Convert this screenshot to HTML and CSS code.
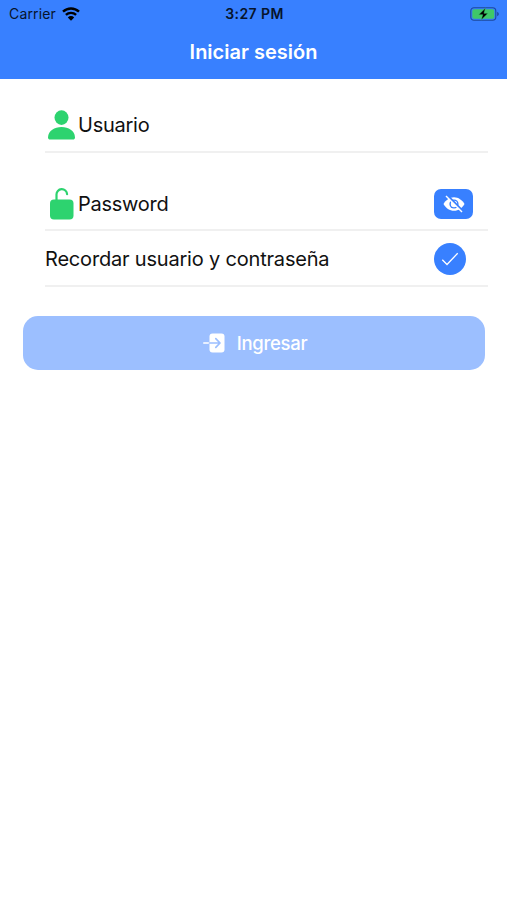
FILE: index.html
```html
<!DOCTYPE html>
<html lang="es">
<head>
    <meta charset="UTF-8">
    <meta name="viewport" content="width=device-width, initial-scale=1.0">
    <title>Iniciar sesión</title>
    <link rel="stylesheet" href="styles.css">
</head>
<body>
    <header class="header">
        <!-- Status bar -->
        <div class="status-bar">
            <div class="carrier">
                <span>Carrier</span>
                <svg class="wifi" viewBox="0 0 18 14">
                    <path d="M1 4.7a11.6 11.6 0 0 1 16 0M3.9 7.9a7.4 7.4 0 0 1 10.2 0" fill="none" stroke="#000" stroke-width="2.4"/>
                    <path d="M9 13.7L5.8 10.4a4.6 4.6 0 0 1 6.4 0z"/>
                </svg>
            </div>
            <span class="time">3:27 PM</span>
            <svg class="battery" viewBox="0 0 30 14">
                <rect x=".8" y=".8" width="25" height="12.4" rx="3.2" fill="none" stroke="#1c489c" stroke-width="1.1"/>
                <rect x="2.3" y="2.3" width="22" height="9.4" rx="1.8" fill="#3fc869"/>
                <path d="M27.2 4.8c2.2 1 2.2 3.4 0 4.4z" fill="#1c489c"/>
                <path d="M15.5 1L8.7 7.7h4L11.2 13 18 6.3h-4z" stroke="#3fc869" stroke-width=".5"/>
            </svg>
        </div>
        <h1 class="title">Iniciar sesión</h1>
    </header>

    <!-- Login form -->
    <form class="login">
        <div class="item item-user">
            <svg class="icon-user" viewBox="0 0 27 30">
                <ellipse cx="13.5" cy="7.6" rx="7" ry="7.3"/>
                <path d="M2.2 29.5C.8 29.5 0 28.6 0 27.2 .5 20.8 6.4 17.1 13.5 17.1S26.5 20.8 27 27.2c0 1.4-.8 2.3-2.2 2.3z"/>
            </svg>
            <label>Usuario</label>
        </div>
        <div class="item item-password">
            <svg class="icon-lock" viewBox="0 0 24 32">
                <rect x="0" y="11.5" width="23.5" height="20" rx="4"/>
                <path d="M6.5 13V6.8a5.3 5.3 0 0 1 10.6-.6" fill="none" stroke="#2dd36f" stroke-width="2.2" stroke-linecap="round"/>
            </svg>
            <label>Password</label>
            <button type="button" class="btn-eye" aria-label="Mostrar">
                <svg viewBox="0 0 22 18">
                    <path d="M.5 9C2.8 5 6.600 2.200 11 2.200S19.200 5 21.500 9c-2.300 4-6.100 6.800-10.500 6.800S2.800 13 .5 9z" fill="#fff"/>
                    <circle cx="11" cy="9" r="4.6" fill="#3880ff"/>
                    <circle cx="11" cy="9" r="3.2" fill="#fff"/>
                    <path d="M4.2 .2L20.2 16.2" stroke="#3880ff" stroke-width="2"/>
                    <path d="M3 1L19 17" stroke="#fff" stroke-width="1.5"/>
                </svg>
            </button>
        </div>
        <div class="item item-remember">
            <label>Recordar usuario y contraseña</label>
            <span class="check">
                <svg viewBox="0 0 18 14">
                    <path d="M1.3 7.8L6 12.5 16.7 1.2" fill="none" stroke="#fff" stroke-width="1.3"/>
                </svg>
            </span>
        </div>
        <button type="button" class="btn-login">
            <svg class="icon-enter" viewBox="0 0 22 20">
                <rect x="6.5" y=".5" width="15" height="19" rx="3" fill="#fff"/>
                <path d="M.8 10H6.5" stroke="#fff" stroke-width="1.7" stroke-linecap="round"/>
                <path d="M6.5 10h10M12.8 5.7L17 10l-4.2 4.3" fill="none" stroke="#9cbfff" stroke-width="1.7" stroke-linecap="round" stroke-linejoin="round"/>
            </svg>
            <span>Ingresar</span>
        </button>
    </form>
</body>
</html>
```

FILE: styles.css
```css
body {
    font-family: Inter, "Liberation Sans", sans-serif;
    margin: 0;
    background-color: #fff;
    color: #111;
}
.header {
    box-sizing: border-box;
    height: 79px;
    background-color: #3880ff;
}
.status-bar {
    display: grid;
    grid-template-columns: 1fr auto 1fr;
    align-items: center;
    height: 27px;
    padding: 0 7px 0 9px;
    font-size: 14px;
    color: #07142c;
}
.carrier {
    display: flex;
    align-items: center;
    gap: 6px;
    letter-spacing: 0.15px;
}
.wifi {
    width: 18px;
    height: 14px;
}
.time {
    font-size: 14px;
    font-weight: 600;
    letter-spacing: 0.4px;
}
.battery {
    width: 30px;
    height: 14px;
    justify-self: end;
}
.title {
    margin: 0;
    font-size: 20px;
    font-weight: 600;
    line-height: 51px;
    text-align: center;
    color: #fff;
}
.item {
    display: flex;
    align-items: center;
    box-sizing: border-box;
    margin: 0 19px 0 45px;
    border-bottom: 2px solid #f0f0f0;
    font-size: 20px;
    letter-spacing: -0.25px;
}
.item svg {
    display: block;
}
.item-user {
    height: 74px;
    padding: 20px 0 0 3px;
}
.item-password {
    height: 78px;
    padding: 25px 15px 0 5px;
}
.item-remember {
    height: 56px;
    padding: 1px 22px 0 0;
    letter-spacing: -0.19px;
}
.icon-user {
    width: 27px;
    height: 30px;
    margin-right: 3px;
    fill: #2dd36f;
}
.icon-lock {
    width: 24px;
    height: 32px;
    margin-right: 4px;
    fill: #2dd36f;
}
.btn-eye {
    display: flex;
    align-items: center;
    justify-content: center;
    width: 39px;
    height: 30px;
    margin-left: auto;
    padding: 0;
    border: none;
    border-radius: 7px;
    background-color: #3880ff;
}
.btn-eye svg {
    width: 22px;
    height: 18px;
}
.check {
    display: flex;
    align-items: center;
    justify-content: center;
    width: 32px;
    height: 32px;
    margin-left: auto;
    border-radius: 50%;
    background-color: #3880ff;
}
.check svg {
    width: 18px;
    height: 14px;
}
.btn-login {
    display: flex;
    align-items: center;
    justify-content: center;
    gap: 12px;
    width: 462px;
    height: 54px;
    margin: 29px 0 0 23px;
    padding: 0 0 0 2px;
    border: none;
    border-radius: 15px;
    background-color: #9cbfff;
    color: #fff;
    font-family: inherit;
    font-size: 18.5px;
    font-weight: 500;
    letter-spacing: -0.3px;
}
.icon-enter {
    width: 22px;
    height: 20px;
}
```
